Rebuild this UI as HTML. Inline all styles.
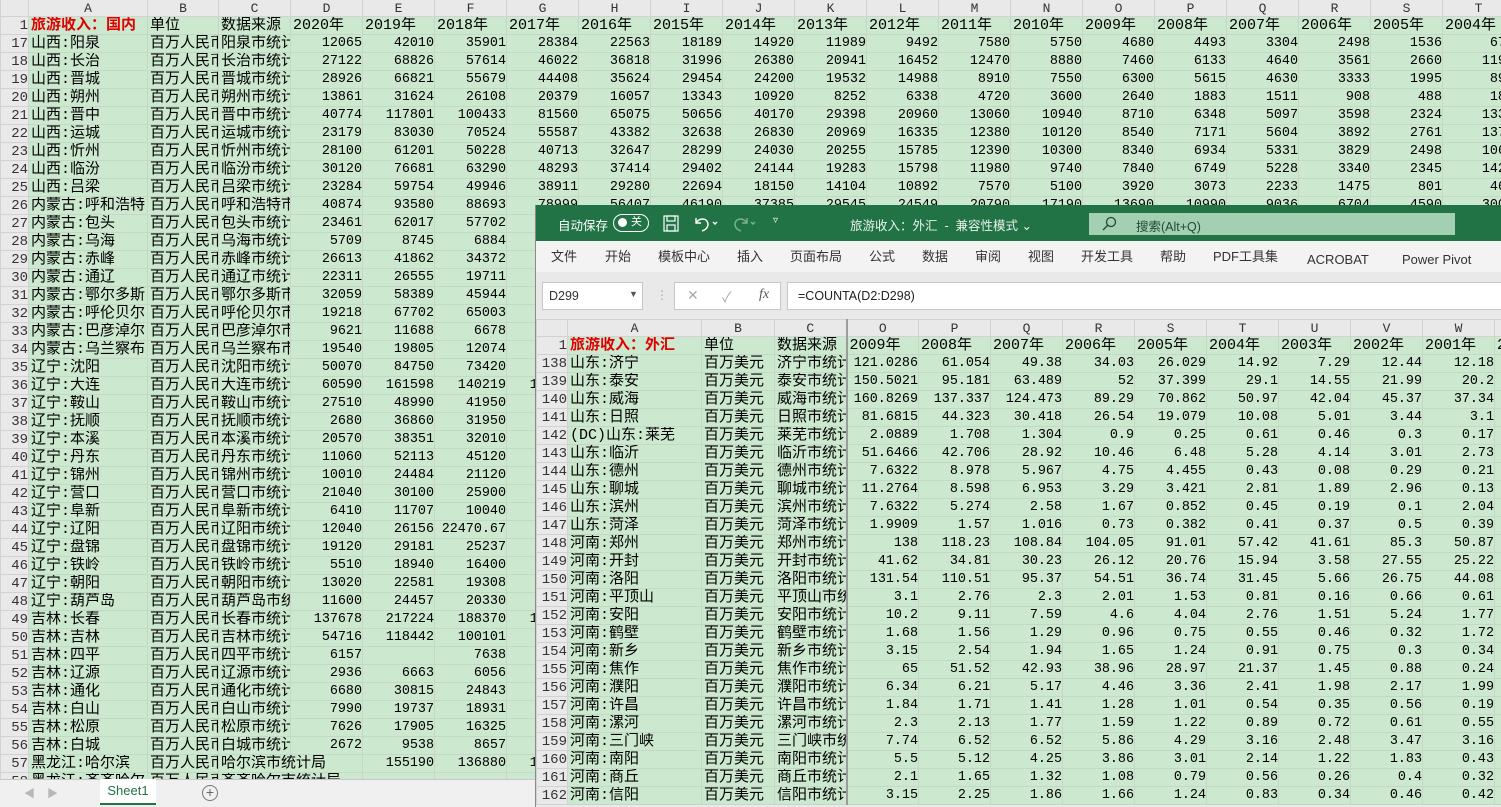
<!DOCTYPE html>
<html><head><meta charset="utf-8"><style>
*{box-sizing:border-box;margin:0;padding:0}
body{width:1501px;height:807px;overflow:hidden;background:#fff;position:relative;font-family:"Liberation Sans","Noto Sans CJK SC",sans-serif}
.g{position:absolute;border-collapse:collapse;table-layout:fixed;font-family:"Liberation Mono","Noto Sans CJK SC",monospace;font-size:13.4px}
.g td{height:18px;padding:0;border:1px solid #c3d8c5;background:#cce8cf;white-space:nowrap;overflow:hidden;color:#000;line-height:16px;text-indent:2px}
.g td.n{text-align:right;text-indent:0}
.g td.t{font-size:15px;font-family:"Liberation Mono","Noto Sans CJK SC",monospace}
.g th{height:18px;padding:0;background:#e9e9e9;border:1px solid #d2d2d2;font-weight:normal;color:#333;font-size:13px;text-align:center;overflow:hidden;white-space:nowrap}
.g tr.h th{height:17px}
.g th.r{text-align:right;font-size:14px}
.red{color:#e00000!important;font-weight:bold}
#left{position:absolute;left:0;top:0;width:1501px;height:779px;overflow:hidden;background:#cce8cf}
#tabs{position:absolute;left:0;top:779px;width:535px;height:28px;background:#f0f0f0;border-top:1px solid #c8c8c8}
#win{position:absolute;left:535px;top:205px;width:966px;height:602px;background:#e9e9e9;border-left:1px solid #8a8a8a;overflow:hidden}
.tb{position:absolute;left:0;top:0;width:966px;height:36px;background:#217346;color:#fff;font-size:12.5px}
.rib{position:absolute;left:0;top:36px;width:966px;height:31px;background:#f3f3f3;font-size:13px;color:#333}
.rib span{position:absolute;top:7px;line-height:18px}
.fb{position:absolute;background:#fff;border:1px solid #c6c6c6;height:28px;top:77px}
</style></head><body>
<div id="left">
<table class="g" style="left:0;top:-1px;width:1546px">
<colgroup><col style="width:28px"><col style="width:119px"><col style="width:71px"><col style="width:72px"><col style="width:72px"><col style="width:72px"><col style="width:72px"><col style="width:72px"><col style="width:72px"><col style="width:72px"><col style="width:72px"><col style="width:72px"><col style="width:72px"><col style="width:72px"><col style="width:72px"><col style="width:72px"><col style="width:72px"><col style="width:72px"><col style="width:72px"><col style="width:72px"><col style="width:72px"><col style="width:32px"></colgroup>
<tr class="h"><th style="background:#e9e9e9"></th><th>A</th><th>B</th><th>C</th><th>D</th><th>E</th><th>F</th><th>G</th><th>H</th><th>I</th><th>J</th><th>K</th><th>L</th><th>M</th><th>N</th><th>O</th><th>P</th><th>Q</th><th>R</th><th>S</th><th>T</th><th>U</th></tr>
<tr><th class="r">1</th><td class="t red">旅游收入：国内</td><td class="t">单位</td><td class="t">数据来源</td><td class="t">2020年</td><td class="t">2019年</td><td class="t">2018年</td><td class="t">2017年</td><td class="t">2016年</td><td class="t">2015年</td><td class="t">2014年</td><td class="t">2013年</td><td class="t">2012年</td><td class="t">2011年</td><td class="t">2010年</td><td class="t">2009年</td><td class="t">2008年</td><td class="t">2007年</td><td class="t">2006年</td><td class="t">2005年</td><td class="t">2004年</td><td class="t">2003年</td></tr>
<tr><th class="r">17</th><td class="t">山西:阳泉</td><td class="t">百万人民币</td><td class="t">阳泉市统计局</td><td class="n">12065</td><td class="n">42010</td><td class="n">35901</td><td class="n">28384</td><td class="n">22563</td><td class="n">18189</td><td class="n">14920</td><td class="n">11989</td><td class="n">9492</td><td class="n">7580</td><td class="n">5750</td><td class="n">4680</td><td class="n">4493</td><td class="n">3304</td><td class="n">2498</td><td class="n">1536</td><td class="n">672</td><td></td></tr>
<tr><th class="r">18</th><td class="t">山西:长治</td><td class="t">百万人民币</td><td class="t">长治市统计局</td><td class="n">27122</td><td class="n">68826</td><td class="n">57614</td><td class="n">46022</td><td class="n">36818</td><td class="n">31996</td><td class="n">26380</td><td class="n">20941</td><td class="n">16452</td><td class="n">12470</td><td class="n">8880</td><td class="n">7460</td><td class="n">6133</td><td class="n">4640</td><td class="n">3561</td><td class="n">2660</td><td class="n">1195</td><td></td></tr>
<tr><th class="r">19</th><td class="t">山西:晋城</td><td class="t">百万人民币</td><td class="t">晋城市统计局</td><td class="n">28926</td><td class="n">66821</td><td class="n">55679</td><td class="n">44408</td><td class="n">35624</td><td class="n">29454</td><td class="n">24200</td><td class="n">19532</td><td class="n">14988</td><td class="n">8910</td><td class="n">7550</td><td class="n">6300</td><td class="n">5615</td><td class="n">4630</td><td class="n">3333</td><td class="n">1995</td><td class="n">892</td><td></td></tr>
<tr><th class="r">20</th><td class="t">山西:朔州</td><td class="t">百万人民币</td><td class="t">朔州市统计局</td><td class="n">13861</td><td class="n">31624</td><td class="n">26108</td><td class="n">20379</td><td class="n">16057</td><td class="n">13343</td><td class="n">10920</td><td class="n">8252</td><td class="n">6338</td><td class="n">4720</td><td class="n">3600</td><td class="n">2640</td><td class="n">1883</td><td class="n">1511</td><td class="n">908</td><td class="n">488</td><td class="n">183</td><td></td></tr>
<tr><th class="r">21</th><td class="t">山西:晋中</td><td class="t">百万人民币</td><td class="t">晋中市统计局</td><td class="n">40774</td><td class="n">117801</td><td class="n">100433</td><td class="n">81560</td><td class="n">65075</td><td class="n">50656</td><td class="n">40170</td><td class="n">29398</td><td class="n">20960</td><td class="n">13060</td><td class="n">10940</td><td class="n">8710</td><td class="n">6348</td><td class="n">5097</td><td class="n">3598</td><td class="n">2324</td><td class="n">1336</td><td></td></tr>
<tr><th class="r">22</th><td class="t">山西:运城</td><td class="t">百万人民币</td><td class="t">运城市统计局</td><td class="n">23179</td><td class="n">83030</td><td class="n">70524</td><td class="n">55587</td><td class="n">43382</td><td class="n">32638</td><td class="n">26830</td><td class="n">20969</td><td class="n">16335</td><td class="n">12380</td><td class="n">10120</td><td class="n">8540</td><td class="n">7171</td><td class="n">5604</td><td class="n">3892</td><td class="n">2761</td><td class="n">1372</td><td></td></tr>
<tr><th class="r">23</th><td class="t">山西:忻州</td><td class="t">百万人民币</td><td class="t">忻州市统计局</td><td class="n">28100</td><td class="n">61201</td><td class="n">50228</td><td class="n">40713</td><td class="n">32647</td><td class="n">28299</td><td class="n">24030</td><td class="n">20255</td><td class="n">15785</td><td class="n">12390</td><td class="n">10300</td><td class="n">8340</td><td class="n">6934</td><td class="n">5331</td><td class="n">3829</td><td class="n">2498</td><td class="n">1064</td><td></td></tr>
<tr><th class="r">24</th><td class="t">山西:临汾</td><td class="t">百万人民币</td><td class="t">临汾市统计局</td><td class="n">30120</td><td class="n">76681</td><td class="n">63290</td><td class="n">48293</td><td class="n">37414</td><td class="n">29402</td><td class="n">24144</td><td class="n">19283</td><td class="n">15798</td><td class="n">11980</td><td class="n">9740</td><td class="n">7840</td><td class="n">6749</td><td class="n">5228</td><td class="n">3340</td><td class="n">2345</td><td class="n">1424</td><td></td></tr>
<tr><th class="r">25</th><td class="t">山西:吕梁</td><td class="t">百万人民币</td><td class="t">吕梁市统计局</td><td class="n">23284</td><td class="n">59754</td><td class="n">49946</td><td class="n">38911</td><td class="n">29280</td><td class="n">22694</td><td class="n">18150</td><td class="n">14104</td><td class="n">10892</td><td class="n">7570</td><td class="n">5100</td><td class="n">3920</td><td class="n">3073</td><td class="n">2233</td><td class="n">1475</td><td class="n">801</td><td class="n">465</td><td></td></tr>
<tr><th class="r">26</th><td class="t">内蒙古:呼和浩特</td><td class="t">百万人民币</td><td class="t">呼和浩特市统计局</td><td class="n">40874</td><td class="n">93580</td><td class="n">88693</td><td class="n">78999</td><td class="n">56407</td><td class="n">46190</td><td class="n">37385</td><td class="n">29545</td><td class="n">24549</td><td class="n">20790</td><td class="n">17190</td><td class="n">13690</td><td class="n">10990</td><td class="n">9036</td><td class="n">6704</td><td class="n">4590</td><td class="n">3007</td><td></td></tr>
<tr><th class="r">27</th><td class="t">内蒙古:包头</td><td class="t">百万人民币</td><td class="t">包头市统计局</td><td class="n">23461</td><td class="n">62017</td><td class="n">57702</td><td></td></tr>
<tr><th class="r">28</th><td class="t">内蒙古:乌海</td><td class="t">百万人民币</td><td class="t">乌海市统计局</td><td class="n">5709</td><td class="n">8745</td><td class="n">6884</td><td></td></tr>
<tr><th class="r">29</th><td class="t">内蒙古:赤峰</td><td class="t">百万人民币</td><td class="t">赤峰市统计局</td><td class="n">26613</td><td class="n">41862</td><td class="n">34372</td><td></td></tr>
<tr><th class="r">30</th><td class="t">内蒙古:通辽</td><td class="t">百万人民币</td><td class="t">通辽市统计局</td><td class="n">22311</td><td class="n">26555</td><td class="n">19711</td><td></td></tr>
<tr><th class="r">31</th><td class="t">内蒙古:鄂尔多斯</td><td class="t">百万人民币</td><td class="t">鄂尔多斯市统计局</td><td class="n">32059</td><td class="n">58389</td><td class="n">45944</td><td></td></tr>
<tr><th class="r">32</th><td class="t">内蒙古:呼伦贝尔</td><td class="t">百万人民币</td><td class="t">呼伦贝尔市统计局</td><td class="n">19218</td><td class="n">67702</td><td class="n">65003</td><td></td></tr>
<tr><th class="r">33</th><td class="t">内蒙古:巴彦淖尔</td><td class="t">百万人民币</td><td class="t">巴彦淖尔市统计局</td><td class="n">9621</td><td class="n">11688</td><td class="n">6678</td><td></td></tr>
<tr><th class="r">34</th><td class="t">内蒙古:乌兰察布</td><td class="t">百万人民币</td><td class="t">乌兰察布市统计局</td><td class="n">19540</td><td class="n">19805</td><td class="n">12074</td><td></td></tr>
<tr><th class="r">35</th><td class="t">辽宁:沈阳</td><td class="t">百万人民币</td><td class="t">沈阳市统计局</td><td class="n">50070</td><td class="n">84750</td><td class="n">73420</td><td></td></tr>
<tr><th class="r">36</th><td class="t">辽宁:大连</td><td class="t">百万人民币</td><td class="t">大连市统计局</td><td class="n">60590</td><td class="n">161598</td><td class="n">140219</td><td class="n">119200</td></tr>
<tr><th class="r">37</th><td class="t">辽宁:鞍山</td><td class="t">百万人民币</td><td class="t">鞍山市统计局</td><td class="n">27510</td><td class="n">48990</td><td class="n">41950</td><td></td></tr>
<tr><th class="r">38</th><td class="t">辽宁:抚顺</td><td class="t">百万人民币</td><td class="t">抚顺市统计局</td><td class="n">2680</td><td class="n">36860</td><td class="n">31950</td><td></td></tr>
<tr><th class="r">39</th><td class="t">辽宁:本溪</td><td class="t">百万人民币</td><td class="t">本溪市统计局</td><td class="n">20570</td><td class="n">38351</td><td class="n">32010</td><td></td></tr>
<tr><th class="r">40</th><td class="t">辽宁:丹东</td><td class="t">百万人民币</td><td class="t">丹东市统计局</td><td class="n">11060</td><td class="n">52113</td><td class="n">45120</td><td></td></tr>
<tr><th class="r">41</th><td class="t">辽宁:锦州</td><td class="t">百万人民币</td><td class="t">锦州市统计局</td><td class="n">10010</td><td class="n">24484</td><td class="n">21120</td><td></td></tr>
<tr><th class="r">42</th><td class="t">辽宁:营口</td><td class="t">百万人民币</td><td class="t">营口市统计局</td><td class="n">21040</td><td class="n">30100</td><td class="n">25900</td><td></td></tr>
<tr><th class="r">43</th><td class="t">辽宁:阜新</td><td class="t">百万人民币</td><td class="t">阜新市统计局</td><td class="n">6410</td><td class="n">11707</td><td class="n">10040</td><td></td></tr>
<tr><th class="r">44</th><td class="t">辽宁:辽阳</td><td class="t">百万人民币</td><td class="t">辽阳市统计局</td><td class="n">12040</td><td class="n">26156</td><td class="n">22470.67</td><td></td></tr>
<tr><th class="r">45</th><td class="t">辽宁:盘锦</td><td class="t">百万人民币</td><td class="t">盘锦市统计局</td><td class="n">19120</td><td class="n">29181</td><td class="n">25237</td><td></td></tr>
<tr><th class="r">46</th><td class="t">辽宁:铁岭</td><td class="t">百万人民币</td><td class="t">铁岭市统计局</td><td class="n">5510</td><td class="n">18940</td><td class="n">16400</td><td></td></tr>
<tr><th class="r">47</th><td class="t">辽宁:朝阳</td><td class="t">百万人民币</td><td class="t">朝阳市统计局</td><td class="n">13020</td><td class="n">22581</td><td class="n">19308</td><td></td></tr>
<tr><th class="r">48</th><td class="t">辽宁:葫芦岛</td><td class="t">百万人民币</td><td class="t">葫芦岛市统计局</td><td class="n">11600</td><td class="n">24457</td><td class="n">20330</td><td></td></tr>
<tr><th class="r">49</th><td class="t">吉林:长春</td><td class="t">百万人民币</td><td class="t">长春市统计局</td><td class="n">137678</td><td class="n">217224</td><td class="n">188370</td><td class="n">155000</td></tr>
<tr><th class="r">50</th><td class="t">吉林:吉林</td><td class="t">百万人民币</td><td class="t">吉林市统计局</td><td class="n">54716</td><td class="n">118442</td><td class="n">100101</td><td></td></tr>
<tr><th class="r">51</th><td class="t">吉林:四平</td><td class="t">百万人民币</td><td class="t">四平市统计局</td><td class="n">6157</td><td></td><td class="n">7638</td><td></td></tr>
<tr><th class="r">52</th><td class="t">吉林:辽源</td><td class="t">百万人民币</td><td class="t">辽源市统计局</td><td class="n">2936</td><td class="n">6663</td><td class="n">6056</td><td></td></tr>
<tr><th class="r">53</th><td class="t">吉林:通化</td><td class="t">百万人民币</td><td class="t">通化市统计局</td><td class="n">6680</td><td class="n">30815</td><td class="n">24843</td><td></td></tr>
<tr><th class="r">54</th><td class="t">吉林:白山</td><td class="t">百万人民币</td><td class="t">白山市统计局</td><td class="n">7990</td><td class="n">19737</td><td class="n">18931</td><td></td></tr>
<tr><th class="r">55</th><td class="t">吉林:松原</td><td class="t">百万人民币</td><td class="t">松原市统计局</td><td class="n">7626</td><td class="n">17905</td><td class="n">16325</td><td></td></tr>
<tr><th class="r">56</th><td class="t">吉林:白城</td><td class="t">百万人民币</td><td class="t">白城市统计局</td><td class="n">2672</td><td class="n">9538</td><td class="n">8657</td><td></td></tr>
<tr><th class="r">57</th><td class="t">黑龙江:哈尔滨</td><td class="t">百万人民币</td><td class="t" colspan="2">哈尔滨市统计局</td><td class="n">155190</td><td class="n">136880</td><td class="n">115000</td></tr>
<tr><th class="r">58</th><td class="t">黑龙江:齐齐哈尔</td><td class="t">百万人民币</td><td class="t" colspan="2">齐齐哈尔市统计局</td><td></td><td></td><td></td></tr>
</table>
</div>
<div id="tabs">
<span style="position:absolute;left:24px;top:5px;color:#b8b8b8;font-size:11px">◀</span>
<span style="position:absolute;left:47px;top:5px;color:#b8b8b8;font-size:11px">▶</span>
<div style="position:absolute;left:100px;top:-1px;width:56px;height:26px;background:#fff;border-bottom:2px solid #217346;color:#217346;font-size:13px;text-align:center;line-height:24px">Sheet1</div>
<div style="position:absolute;left:202px;top:5px;width:16px;height:16px;border:1px solid #777;border-radius:50%;color:#666;font-size:14px;line-height:13px;text-align:center">+</div>
</div>
<div id="win">
<div class="tb">
<span style="position:absolute;left:22px;top:10px">自动保存</span>
<div style="position:absolute;left:77px;top:9px;width:36px;height:18px;border:1.5px solid #fff;border-radius:9px"><div style="position:absolute;left:4px;top:3px;width:9px;height:9px;background:#fff;border-radius:50%"></div><span style="position:absolute;left:17px;top:0;font-size:11px;line-height:15px">关</span></div>
<svg style="position:absolute;left:127px;top:10px" width="16" height="17" viewBox="0 0 16 17" fill="none" stroke="#fff" stroke-width="1.2"><rect x="1" y="1" width="14" height="15"/><rect x="4" y="1" width="8" height="5"/><rect x="4" y="10" width="8" height="6"/></svg>
<svg style="position:absolute;left:157px;top:9px" width="26" height="18" viewBox="0 0 26 18" fill="none" stroke="#fff" stroke-width="1.4"><path d="M3 4v5h5M3 9c3-5 11-6 12 1 0 4-3 6-6 7"/><path d="M20 8l2 2 2-2"/></svg>
<svg style="position:absolute;left:196px;top:9px" width="26" height="18" viewBox="0 0 26 18" fill="none" stroke="#7fb093" stroke-width="1.4"><path d="M15 4v5h-5M15 9c-3-5-11-6-12 1 0 4 3 6 6 7"/><path d="M19 8l2 2 2-2"/></svg>
<span style="position:absolute;left:237px;top:10px;font-size:10px">▿</span>
<span style="position:absolute;left:314px;top:10px;color:#e8f1eb">旅游收入：外汇 &nbsp;-&nbsp; 兼容性模式 ⌄</span>
<div style="position:absolute;left:553px;top:8px;width:366px;height:22px;background:#a3cfb2;color:#1f4a30;font-size:12.5px"><svg style="position:absolute;left:12px;top:3px" width="16" height="16" viewBox="0 0 16 16" fill="none" stroke="#1f4a30" stroke-width="1.3"><circle cx="10" cy="6" r="4.5"/><path d="M7 9l-5 5"/></svg><span style="position:absolute;left:47px;top:3px">搜索(Alt+Q)</span></div>
</div>
<div class="rib">
<span style="left:15px">文件</span><span style="left:69px">开始</span><span style="left:122px">模板中心</span><span style="left:201px">插入</span><span style="left:254px">页面布局</span><span style="left:333px">公式</span><span style="left:386px">数据</span><span style="left:439px">审阅</span><span style="left:492px">视图</span><span style="left:545px">开发工具</span><span style="left:624px">帮助</span><span style="left:677px">PDF工具集</span><span style="left:771px;top:10px">ACROBAT</span><span style="left:866px;top:10px">Power Pivot</span>
</div>
<div class="fb" style="left:6px;width:101px;font-size:12.5px;color:#333"><span style="position:absolute;left:6px;top:6px">D299</span><span style="position:absolute;left:86px;top:6px;font-size:9px;color:#555">▼</span></div>
<span style="position:absolute;left:120px;top:83px;color:#aaa;font-size:12px">⋮</span>
<div class="fb" style="left:138px;width:107px;font-size:14px;color:#aaa"><span style="position:absolute;left:12px;top:4px">✕</span><span style="position:absolute;left:47px;top:4px">✓</span><span style="position:absolute;left:84px;top:4px;color:#555;font-style:italic;font-family:'Liberation Serif',serif">fx</span></div>
<div class="fb" style="left:251px;width:720px;font-size:12.5px;color:#222"><span style="position:absolute;left:10px;top:6px">=COUNTA(D2:D298)</span></div>
<table class="g" style="left:0;top:114px;width:1030px">
<colgroup><col style="width:31px"><col style="width:134px"><col style="width:73px"><col style="width:72px"><col style="width:72px"><col style="width:72px"><col style="width:72px"><col style="width:72px"><col style="width:72px"><col style="width:72px"><col style="width:72px"><col style="width:72px"><col style="width:72px"><col style="width:72px"></colgroup>
<tr class="h"><th></th><th>A</th><th>B</th><th style="border-right:2px solid #9c9c9c">C</th><th>O</th><th>P</th><th>Q</th><th>R</th><th>S</th><th>T</th><th>U</th><th>V</th><th>W</th><th>X</th></tr>
<tr><th class="r">1</th><td class="t red">旅游收入：外汇</td><td class="t">单位</td><td class="t" style="border-right:2px solid #9c9c9c">数据来源</td><td class="t">2009年</td><td class="t">2008年</td><td class="t">2007年</td><td class="t">2006年</td><td class="t">2005年</td><td class="t">2004年</td><td class="t">2003年</td><td class="t">2002年</td><td class="t">2001年</td><td class="t">2000年</td></tr>
<tr><th class="r">138</th><td class="t">山东:济宁</td><td class="t">百万美元</td><td class="t" style="border-right:2px solid #9c9c9c">济宁市统计局</td><td class="n">121.0286</td><td class="n">61.054</td><td class="n">49.38</td><td class="n">34.03</td><td class="n">26.029</td><td class="n">14.92</td><td class="n">7.29</td><td class="n">12.44</td><td class="n">12.18</td><td></td></tr>
<tr><th class="r">139</th><td class="t">山东:泰安</td><td class="t">百万美元</td><td class="t" style="border-right:2px solid #9c9c9c">泰安市统计局</td><td class="n">150.5021</td><td class="n">95.181</td><td class="n">63.489</td><td class="n">52</td><td class="n">37.399</td><td class="n">29.1</td><td class="n">14.55</td><td class="n">21.99</td><td class="n">20.2</td><td></td></tr>
<tr><th class="r">140</th><td class="t">山东:威海</td><td class="t">百万美元</td><td class="t" style="border-right:2px solid #9c9c9c">威海市统计局</td><td class="n">160.8269</td><td class="n">137.337</td><td class="n">124.473</td><td class="n">89.29</td><td class="n">70.862</td><td class="n">50.97</td><td class="n">42.04</td><td class="n">45.37</td><td class="n">37.34</td><td></td></tr>
<tr><th class="r">141</th><td class="t">山东:日照</td><td class="t">百万美元</td><td class="t" style="border-right:2px solid #9c9c9c">日照市统计局</td><td class="n">81.6815</td><td class="n">44.323</td><td class="n">30.418</td><td class="n">26.54</td><td class="n">19.079</td><td class="n">10.08</td><td class="n">5.01</td><td class="n">3.44</td><td class="n">3.1</td><td></td></tr>
<tr><th class="r">142</th><td class="t">(DC)山东:莱芜</td><td class="t">百万美元</td><td class="t" style="border-right:2px solid #9c9c9c">莱芜市统计局</td><td class="n">2.0889</td><td class="n">1.708</td><td class="n">1.304</td><td class="n">0.9</td><td class="n">0.25</td><td class="n">0.61</td><td class="n">0.46</td><td class="n">0.3</td><td class="n">0.17</td><td></td></tr>
<tr><th class="r">143</th><td class="t">山东:临沂</td><td class="t">百万美元</td><td class="t" style="border-right:2px solid #9c9c9c">临沂市统计局</td><td class="n">51.6466</td><td class="n">42.706</td><td class="n">28.92</td><td class="n">10.46</td><td class="n">6.48</td><td class="n">5.28</td><td class="n">4.14</td><td class="n">3.01</td><td class="n">2.73</td><td></td></tr>
<tr><th class="r">144</th><td class="t">山东:德州</td><td class="t">百万美元</td><td class="t" style="border-right:2px solid #9c9c9c">德州市统计局</td><td class="n">7.6322</td><td class="n">8.978</td><td class="n">5.967</td><td class="n">4.75</td><td class="n">4.455</td><td class="n">0.43</td><td class="n">0.08</td><td class="n">0.29</td><td class="n">0.21</td><td></td></tr>
<tr><th class="r">145</th><td class="t">山东:聊城</td><td class="t">百万美元</td><td class="t" style="border-right:2px solid #9c9c9c">聊城市统计局</td><td class="n">11.2764</td><td class="n">8.598</td><td class="n">6.953</td><td class="n">3.29</td><td class="n">3.421</td><td class="n">2.81</td><td class="n">1.89</td><td class="n">2.96</td><td class="n">0.13</td><td></td></tr>
<tr><th class="r">146</th><td class="t">山东:滨州</td><td class="t">百万美元</td><td class="t" style="border-right:2px solid #9c9c9c">滨州市统计局</td><td class="n">7.6322</td><td class="n">5.274</td><td class="n">2.58</td><td class="n">1.67</td><td class="n">0.852</td><td class="n">0.45</td><td class="n">0.19</td><td class="n">0.1</td><td class="n">2.04</td><td></td></tr>
<tr><th class="r">147</th><td class="t">山东:菏泽</td><td class="t">百万美元</td><td class="t" style="border-right:2px solid #9c9c9c">菏泽市统计局</td><td class="n">1.9909</td><td class="n">1.57</td><td class="n">1.016</td><td class="n">0.73</td><td class="n">0.382</td><td class="n">0.41</td><td class="n">0.37</td><td class="n">0.5</td><td class="n">0.39</td><td></td></tr>
<tr><th class="r">148</th><td class="t">河南:郑州</td><td class="t">百万美元</td><td class="t" style="border-right:2px solid #9c9c9c">郑州市统计局</td><td class="n">138</td><td class="n">118.23</td><td class="n">108.84</td><td class="n">104.05</td><td class="n">91.01</td><td class="n">57.42</td><td class="n">41.61</td><td class="n">85.3</td><td class="n">50.87</td><td></td></tr>
<tr><th class="r">149</th><td class="t">河南:开封</td><td class="t">百万美元</td><td class="t" style="border-right:2px solid #9c9c9c">开封市统计局</td><td class="n">41.62</td><td class="n">34.81</td><td class="n">30.23</td><td class="n">26.12</td><td class="n">20.76</td><td class="n">15.94</td><td class="n">3.58</td><td class="n">27.55</td><td class="n">25.22</td><td></td></tr>
<tr><th class="r">150</th><td class="t">河南:洛阳</td><td class="t">百万美元</td><td class="t" style="border-right:2px solid #9c9c9c">洛阳市统计局</td><td class="n">131.54</td><td class="n">110.51</td><td class="n">95.37</td><td class="n">54.51</td><td class="n">36.74</td><td class="n">31.45</td><td class="n">5.66</td><td class="n">26.75</td><td class="n">44.08</td><td></td></tr>
<tr><th class="r">151</th><td class="t">河南:平顶山</td><td class="t">百万美元</td><td class="t" style="border-right:2px solid #9c9c9c">平顶山市统计局</td><td class="n">3.1</td><td class="n">2.76</td><td class="n">2.3</td><td class="n">2.01</td><td class="n">1.53</td><td class="n">0.81</td><td class="n">0.16</td><td class="n">0.66</td><td class="n">0.61</td><td></td></tr>
<tr><th class="r">152</th><td class="t">河南:安阳</td><td class="t">百万美元</td><td class="t" style="border-right:2px solid #9c9c9c">安阳市统计局</td><td class="n">10.2</td><td class="n">9.11</td><td class="n">7.59</td><td class="n">4.6</td><td class="n">4.04</td><td class="n">2.76</td><td class="n">1.51</td><td class="n">5.24</td><td class="n">1.77</td><td></td></tr>
<tr><th class="r">153</th><td class="t">河南:鹤壁</td><td class="t">百万美元</td><td class="t" style="border-right:2px solid #9c9c9c">鹤壁市统计局</td><td class="n">1.68</td><td class="n">1.56</td><td class="n">1.29</td><td class="n">0.96</td><td class="n">0.75</td><td class="n">0.55</td><td class="n">0.46</td><td class="n">0.32</td><td class="n">1.72</td><td></td></tr>
<tr><th class="r">154</th><td class="t">河南:新乡</td><td class="t">百万美元</td><td class="t" style="border-right:2px solid #9c9c9c">新乡市统计局</td><td class="n">3.15</td><td class="n">2.54</td><td class="n">1.94</td><td class="n">1.65</td><td class="n">1.24</td><td class="n">0.91</td><td class="n">0.75</td><td class="n">0.3</td><td class="n">0.34</td><td></td></tr>
<tr><th class="r">155</th><td class="t">河南:焦作</td><td class="t">百万美元</td><td class="t" style="border-right:2px solid #9c9c9c">焦作市统计局</td><td class="n">65</td><td class="n">51.52</td><td class="n">42.93</td><td class="n">38.96</td><td class="n">28.97</td><td class="n">21.37</td><td class="n">1.45</td><td class="n">0.88</td><td class="n">0.24</td><td></td></tr>
<tr><th class="r">156</th><td class="t">河南:濮阳</td><td class="t">百万美元</td><td class="t" style="border-right:2px solid #9c9c9c">濮阳市统计局</td><td class="n">6.34</td><td class="n">6.21</td><td class="n">5.17</td><td class="n">4.46</td><td class="n">3.36</td><td class="n">2.41</td><td class="n">1.98</td><td class="n">2.17</td><td class="n">1.99</td><td></td></tr>
<tr><th class="r">157</th><td class="t">河南:许昌</td><td class="t">百万美元</td><td class="t" style="border-right:2px solid #9c9c9c">许昌市统计局</td><td class="n">1.84</td><td class="n">1.71</td><td class="n">1.41</td><td class="n">1.28</td><td class="n">1.01</td><td class="n">0.54</td><td class="n">0.35</td><td class="n">0.56</td><td class="n">0.19</td><td></td></tr>
<tr><th class="r">158</th><td class="t">河南:漯河</td><td class="t">百万美元</td><td class="t" style="border-right:2px solid #9c9c9c">漯河市统计局</td><td class="n">2.3</td><td class="n">2.13</td><td class="n">1.77</td><td class="n">1.59</td><td class="n">1.22</td><td class="n">0.89</td><td class="n">0.72</td><td class="n">0.61</td><td class="n">0.55</td><td></td></tr>
<tr><th class="r">159</th><td class="t">河南:三门峡</td><td class="t">百万美元</td><td class="t" style="border-right:2px solid #9c9c9c">三门峡市统计局</td><td class="n">7.74</td><td class="n">6.52</td><td class="n">6.52</td><td class="n">5.86</td><td class="n">4.29</td><td class="n">3.16</td><td class="n">2.48</td><td class="n">3.47</td><td class="n">3.16</td><td></td></tr>
<tr><th class="r">160</th><td class="t">河南:南阳</td><td class="t">百万美元</td><td class="t" style="border-right:2px solid #9c9c9c">南阳市统计局</td><td class="n">5.5</td><td class="n">5.12</td><td class="n">4.25</td><td class="n">3.86</td><td class="n">3.01</td><td class="n">2.14</td><td class="n">1.22</td><td class="n">1.83</td><td class="n">0.43</td><td></td></tr>
<tr><th class="r">161</th><td class="t">河南:商丘</td><td class="t">百万美元</td><td class="t" style="border-right:2px solid #9c9c9c">商丘市统计局</td><td class="n">2.1</td><td class="n">1.65</td><td class="n">1.32</td><td class="n">1.08</td><td class="n">0.79</td><td class="n">0.56</td><td class="n">0.26</td><td class="n">0.4</td><td class="n">0.32</td><td></td></tr>
<tr><th class="r">162</th><td class="t">河南:信阳</td><td class="t">百万美元</td><td class="t" style="border-right:2px solid #9c9c9c">信阳市统计局</td><td class="n">3.15</td><td class="n">2.25</td><td class="n">1.86</td><td class="n">1.66</td><td class="n">1.24</td><td class="n">0.83</td><td class="n">0.34</td><td class="n">0.46</td><td class="n">0.42</td><td></td></tr>
</table>
</div>
</body></html>
